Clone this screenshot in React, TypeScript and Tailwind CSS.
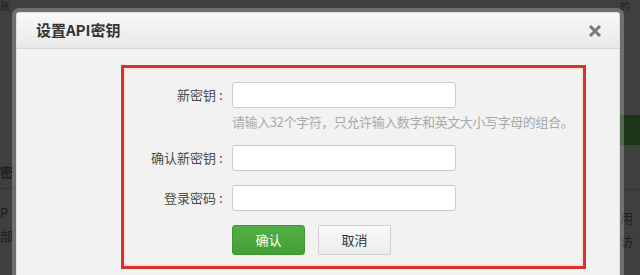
import React from "react";

const font = { fontFamily: '"Microsoft YaHei", "Noto Sans CJK SC", "Liberation Sans", sans-serif' };

const Row = ({ label }: { label: string }) => (
  <div className="flex items-center">
    <label className="w-[108px] text-right text-[13px] text-[#4a4a4a] pr-[6px]">
      {label}
      <span className="inline-block w-[10px] text-left pl-[3px]">:</span>
    </label>
    <input
      type="text"
      className="h-[26px] w-[224px] bg-white border border-[#ccc] rounded-[3px] outline-none"
    />
  </div>
);

const App = () => {
  return (
    <div className="relative w-[640px] h-[275px] overflow-hidden bg-[#3f3f3f]" style={font}>
      {/* dimmed page behind the dialog */}
      <div className="flex h-full text-[13px] text-[#1e1e1e]">
        <div className="w-[16px] flex flex-col overflow-hidden">
          <div className="h-[12px] text-[10px] leading-[12px] whitespace-nowrap">账</div>
          <div className="mt-[150px] h-[20px] font-bold whitespace-nowrap">密</div>
          <div className="mt-[6px] border-t border-[#343434]" />
          <div className="mt-[14px] whitespace-nowrap">P</div>
          <div className="mt-[3px] whitespace-nowrap">部</div>
        </div>
        <div className="flex-1" />
        <div className="w-[20px] flex flex-col overflow-hidden">
          <div className="h-[12px] text-[10px] leading-[12px] whitespace-nowrap">的</div>
          <div className="mt-[103px] h-[30px] bg-[#1d3619]" />
          <div className="mt-[44px] border-t border-[#353535]" />
          <div className="mt-[18px] whitespace-nowrap">用</div>
          <div className="mt-[3px] whitespace-nowrap">访</div>
        </div>
      </div>

      {/* dialog */}
      <div className="absolute left-[16px] top-[12px] w-[604px] h-[280px] bg-[#f2f2f2] border border-[#ddd] shadow-[0_0_0_4px_rgba(255,255,255,0.25)] rounded-t-[3px] flex flex-col">
        <div className="h-[36px] flex items-center justify-between pl-[19px] pr-[17px] bg-gradient-to-b from-[#f8f8f8] to-[#e9e9e9] border-b border-[#d6d6d6]">
          <span className="text-[15px] font-bold text-[#333]">设置API密钥</span>
          <svg width="14" height="14" viewBox="0 0 14 14">
            <path d="M2 2 L12 12 M12 2 L2 12" stroke="#7a7a7a" strokeWidth="3" strokeLinecap="butt" />
          </svg>
        </div>
        <div className="pl-[104px] pt-[16px]">
          <div className="w-[465px] h-[204px] border-[3px] border-[#d8332b] shadow-[inset_0_0_0_2px_#fbe3e0] flex flex-col pt-[14px]">
            <Row label="新密钥" />
            <div className="ml-[108px] mt-[5px] text-[13px] tracking-[-0.4px] text-[#a9a9a9] leading-[18px] whitespace-nowrap">
              请输入32个字符，只允许输入数字和英文大小写字母的组合。
            </div>
            <div className="mt-[14px]">
              <Row label="确认新密钥" />
            </div>
            <div className="mt-[14px]">
              <Row label="登录密码" />
            </div>
            <div className="ml-[108px] mt-[14px] flex gap-[13px]">
              <button className="w-[73px] h-[30px] rounded-[3px] bg-gradient-to-b from-[#52ad42] to-[#45a035] border border-[#3f9530] text-white text-[13px]">
                确认
              </button>
              <button className="w-[73px] h-[30px] rounded-[2px] bg-gradient-to-b from-[#fafafa] to-[#ececec] border border-[#cfcfcf] text-[#333] text-[13px]">
                取消
              </button>
            </div>
          </div>
        </div>
      </div>
    </div>
  );
};

export default App;
